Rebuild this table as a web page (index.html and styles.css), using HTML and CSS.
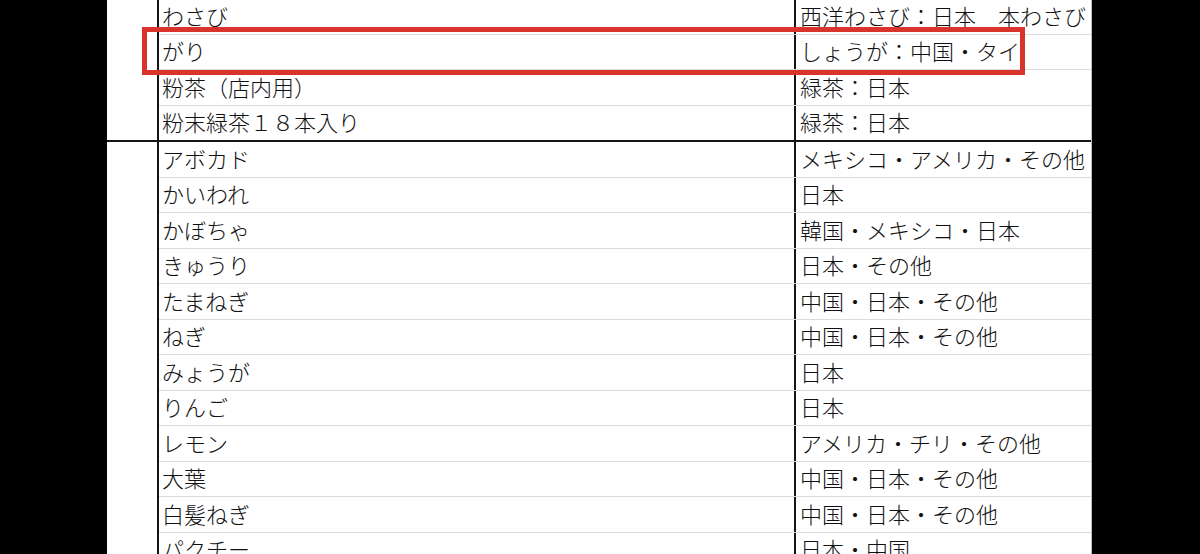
FILE: index.html
```html
<!DOCTYPE html>
<html lang="ja">
<head>
<meta charset="utf-8">
<link rel="stylesheet" href="styles.css">
</head>
<body>
<div class="page">
  <div class="side"></div>
  <div class="sheet">
    <div class="group">
      <div class="gcell"></div>
      <div class="rows">
        <div class="row"><div class="name">わさび</div><div class="val">西洋わさび：日本　本わさび</div></div>
        <div class="row"><div class="name">がり</div><div class="val">しょうが：中国・タイ</div></div>
        <div class="row"><div class="name">粉茶（店内用）</div><div class="val">緑茶：日本</div></div>
        <div class="row"><div class="name">粉末緑茶１８本入り</div><div class="val">緑茶：日本</div></div>
      </div>
    </div>
    <div class="group">
      <div class="gcell"></div>
      <div class="rows">
        <div class="row"><div class="name">アボカド</div><div class="val">メキシコ・アメリカ・その他</div></div>
        <div class="row"><div class="name">かいわれ</div><div class="val">日本</div></div>
        <div class="row"><div class="name">かぼちゃ</div><div class="val">韓国・メキシコ・日本</div></div>
        <div class="row"><div class="name">きゅうり</div><div class="val">日本・その他</div></div>
        <div class="row"><div class="name">たまねぎ</div><div class="val">中国・日本・その他</div></div>
        <div class="row"><div class="name">ねぎ</div><div class="val">中国・日本・その他</div></div>
        <div class="row"><div class="name">みょうが</div><div class="val">日本</div></div>
        <div class="row"><div class="name">りんご</div><div class="val">日本</div></div>
        <div class="row"><div class="name">レモン</div><div class="val">アメリカ・チリ・その他</div></div>
        <div class="row"><div class="name">大葉</div><div class="val">中国・日本・その他</div></div>
        <div class="row"><div class="name">白髪ねぎ</div><div class="val">中国・日本・その他</div></div>
        <div class="row"><div class="name">パクチー</div><div class="val">日本・中国</div></div>
      </div>
    </div>
  </div>
  <div class="side side-right"></div>
</div>
<div class="highlight"></div>
</body>
</html>
```
FILE: styles.css
```css
html, body {
  margin: 0;
  padding: 0;
}
body {
  position: relative;
  width: 1200px;
  height: 554px;
  overflow: hidden;
  background: #000;
  font-family: "Noto Sans CJK JP", "Noto Sans", sans-serif;
  font-size: 22px;
  font-weight: 300;
  color: #111;
}
.page {
  display: flex;
  height: 554px;
}
.side {
  width: 107px;
  flex: none;
  background: #000;
}
.side-right {
  flex: 1;
}
.sheet {
  width: 985px;
  flex: none;
  background: #fff;
  margin-top: -1px;
  border-right: 1px solid #bdbdbd;
  box-sizing: border-box;
}
.group {
  display: flex;
  border-bottom: 2px solid #141414;
}
.gcell {
  width: 50px;
  flex: none;
  border-right: 2px solid #141414;
}
.rows {
  flex: 1;
  display: flex;
  flex-direction: column;
}
.row {
  display: flex;
  height: 35.5px;
  box-sizing: border-box;
  border-bottom: 1px solid #dcdcdc;
}
.row:last-child {
  border-bottom: none;
  height: 34.5px;
}
.name {
  width: 635px;
  flex: none;
  box-sizing: border-box;
  padding: 0 0 3px 3px;
  display: flex;
  align-items: center;
  line-height: 1;
  white-space: nowrap;
}
.val {
  flex: 1;
  box-sizing: border-box;
  border-left: 2px solid #141414;
  padding: 0 0 3px 4px;
  display: flex;
  align-items: center;
  line-height: 1;
  white-space: nowrap;
  overflow: hidden;
}
.highlight {
  position: absolute;
  left: 142px;
  top: 27px;
  width: 883px;
  height: 48px;
  box-sizing: border-box;
  border: 5px solid #d8342c;
}
```
